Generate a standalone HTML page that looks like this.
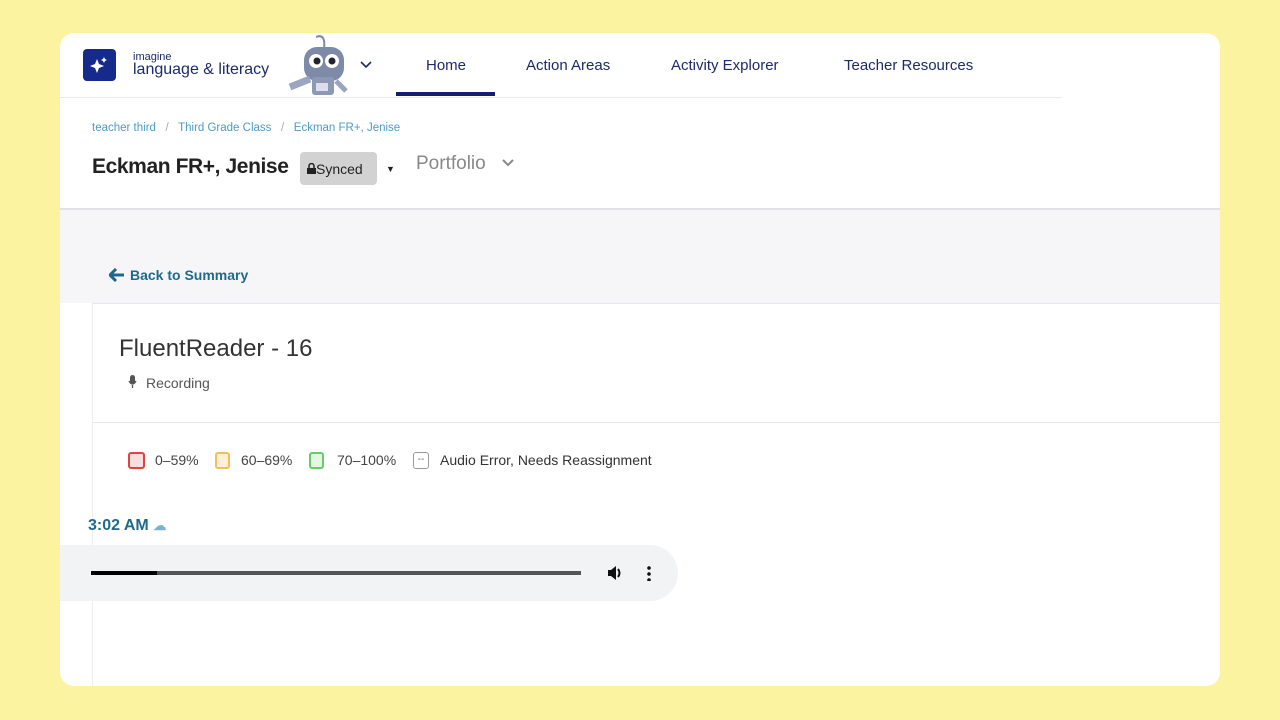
<!DOCTYPE html>
<html><head><meta charset="utf-8"><style>
*{margin:0;padding:0;box-sizing:border-box}
body{width:1280px;height:720px;background:#fcf3a0;font-family:"Liberation Sans",sans-serif;position:relative;overflow:hidden}
.card{position:absolute;left:60px;top:33px;width:1160px;height:653px;background:#fff;border-radius:14px;overflow:hidden}
.abs{position:absolute}
.nav{font-size:15px;color:#1b2a6b;top:57px}
.band{left:0;top:175px;width:1160px;height:95px;background:#f6f6f8;border-top:2px solid #e3e1e6}
</style></head><body>
<div class="card">
  <div class="abs" style="left:23px;top:16px;width:33px;height:32px;background:#162a8c;border-radius:4px"></div>
  <svg class="abs" style="left:27px;top:20px" width="25" height="25" viewBox="0 0 25 25"><path d="M10 6 L12 11 L17 13 L12 15 L10 20 L8 15 L3 13 L8 11Z M17 4 L18 6 L20 7 L18 8 L17 10 L16 8 L14 7 L16 6Z" fill="#fff"/></svg>
  <div class="abs" style="left:73px;top:18px;font-size:11px;color:#1b2a6b">imagine</div>
  <div class="abs" style="left:73px;top:28px;font-size:16px;color:#1b2a6b">language &amp; literacy</div>
  <svg class="abs" style="left:228px;top:0px" width="66" height="64" viewBox="0 0 66 64">
    <path d="M28 4 Q38 0 36 16" stroke="#7a88a8" stroke-width="2" fill="none"/>
    <rect x="16" y="14" width="40" height="34" rx="13" fill="#7d8aa8"/>
    <circle cx="28" cy="28" r="7" fill="#fff"/><circle cx="44" cy="28" r="7" fill="#fff"/>
    <circle cx="29" cy="28" r="3.5" fill="#223"/><circle cx="44" cy="28" r="3.5" fill="#223"/>
    <rect x="24" y="44" width="22" height="18" rx="3" fill="#8b98b6"/>
    <rect x="28" y="50" width="12" height="8" fill="#dde"/>
    <path d="M2 54 L22 46" stroke="#9aa6c0" stroke-width="7"/>
    <path d="M48 48 L58 58" stroke="#9aa6c0" stroke-width="5"/>
  </svg>
  <svg class="abs" style="left:300px;top:28px" width="12" height="8"><path d="M1 1 L6 6 L11 1" stroke="#1b2a6b" stroke-width="1.6" fill="none"/></svg>
  <div class="abs nav" style="left:366px;top:24px">Home</div>
  <div class="abs" style="left:336px;top:59px;width:99px;height:4px;background:#13206b"></div>
  <div class="abs nav" style="left:466px;top:24px">Action Areas</div>
  <div class="abs nav" style="left:611px;top:24px">Activity Explorer</div>
  <div class="abs nav" style="left:784px;top:24px">Teacher Resources</div>
  <div class="abs" style="left:0;top:64px;width:1002px;height:1px;background:#eceaf0"></div>
  <div class="abs" style="left:32px;top:89px;font-size:11.5px;color:#4a9cc4">teacher third &nbsp;&nbsp;<span style="color:#aaa">/</span>&nbsp;&nbsp; Third Grade Class &nbsp;&nbsp;<span style="color:#aaa">/</span>&nbsp;&nbsp; Eckman FR+, Jenise</div>
  <div class="abs" style="left:32px;top:122px;font-size:21px;font-weight:bold;color:#222;letter-spacing:-0.4px">Eckman FR+, Jenise</div>
  <div class="abs" style="left:240px;top:119px;width:77px;height:33px;background:#d2d2d2;border-radius:4px;font-size:14px;color:#222;padding:9px 0 0 7px">
    <svg width="9" height="11" viewBox="0 0 9 11"><rect x="0" y="5" width="9" height="6" fill="#222"/><path d="M2 5 V3 A2.5 2.5 0 0 1 7 3 V5" stroke="#222" stroke-width="1.5" fill="none"/></svg>Synced</div>
  <div class="abs" style="left:326px;top:131px;font-size:9px;color:#222">▼</div>
  <div class="abs" style="left:356px;top:120px;font-size:19px;color:#888">Portfolio</div>
  <svg class="abs" style="left:442px;top:126px" width="12" height="8"><path d="M1 1 L6 6 L11 1" stroke="#888" stroke-width="2" fill="none"/></svg>
  <div class="abs band"></div>
  <svg class="abs" style="left:49px;top:235px" width="16" height="14" viewBox="0 0 16 14"><path d="M7 1 L1 7 L7 13 M1 7 H15" stroke="#1f6a8c" stroke-width="3" fill="none"/></svg>
  <div class="abs" style="left:70px;top:234px;font-size:14px;font-weight:bold;color:#1f6a8c">Back to Summary</div>
  <div class="abs" style="left:32px;top:270px;width:1128px;height:383px;background:#fff;border-top:1px solid #e8e8ec;border-left:1px solid #eee"></div>
  <div class="abs" style="left:32px;top:389px;width:1128px;height:1px;background:#e8e8ec"></div>
  <div class="abs" style="left:59px;top:302px;font-size:24px;color:#333">FluentReader - 16</div>
  <svg class="abs" style="left:68px;top:342px" width="9" height="14" viewBox="0 0 9 14"><rect x="2" y="0" width="5" height="9" rx="2.5" fill="#555"/><path d="M1 6 Q4.5 12 8 6 M4.5 10 V13" stroke="#555" stroke-width="1.3" fill="none"/></svg>
  <div class="abs" style="left:86px;top:342px;font-size:14px;color:#555">Recording</div>
  <div class="abs" style="left:68px;top:419px;width:17px;height:17px;border:2px solid #d44;background:#fadddd;border-radius:3px"></div>
  <div class="abs" style="left:95px;top:419px;font-size:14px;color:#444">0–59%</div>
  <div class="abs" style="left:155px;top:419px;width:15px;height:17px;border:2px solid #f0c060;background:#fdf0d4;border-radius:3px"></div>
  <div class="abs" style="left:181px;top:419px;font-size:14px;color:#444">60–69%</div>
  <div class="abs" style="left:249px;top:419px;width:15px;height:17px;border:2px solid #6c6;background:#e4f6e4;border-radius:3px"></div>
  <div class="abs" style="left:277px;top:419px;font-size:14px;color:#444">70–100%</div>
  <div class="abs" style="left:353px;top:419px;width:16px;height:17px;border:1.5px solid #999;border-radius:3px;font-size:10px;color:#666;text-align:center;line-height:13px">--</div>
  <div class="abs" style="left:380px;top:419px;font-size:14px;color:#333">Audio Error, Needs Reassignment</div>
  <div class="abs" style="left:28px;top:484px;font-size:16px;font-weight:bold;color:#1f6a8c">3:02 AM <span style="color:#7ab4cc;font-size:13px">&#9729;</span></div>
  <div class="abs" style="left:0;top:512px;width:618px;height:56px;background:#f1f3f4;border-radius:0 28px 28px 0"></div>
  <div class="abs" style="left:31px;top:538px;width:490px;height:4px;background:#555"></div>
  <div class="abs" style="left:31px;top:538px;width:66px;height:4px;background:#000"></div>
  <svg class="abs" style="left:546px;top:531px" width="18" height="18" viewBox="0 0 18 18"><path d="M2 6 H5 L10 2 V16 L5 12 H2Z" fill="#111"/><path d="M12 5 Q15 9 12 13" stroke="#111" stroke-width="2" fill="none"/></svg>
  <div class="abs" style="left:587px;top:532px;width:4px;height:16px;background:radial-gradient(circle,#111 1.6px,transparent 2px) 0 0/4px 6px"></div>
</div>
</body></html>
